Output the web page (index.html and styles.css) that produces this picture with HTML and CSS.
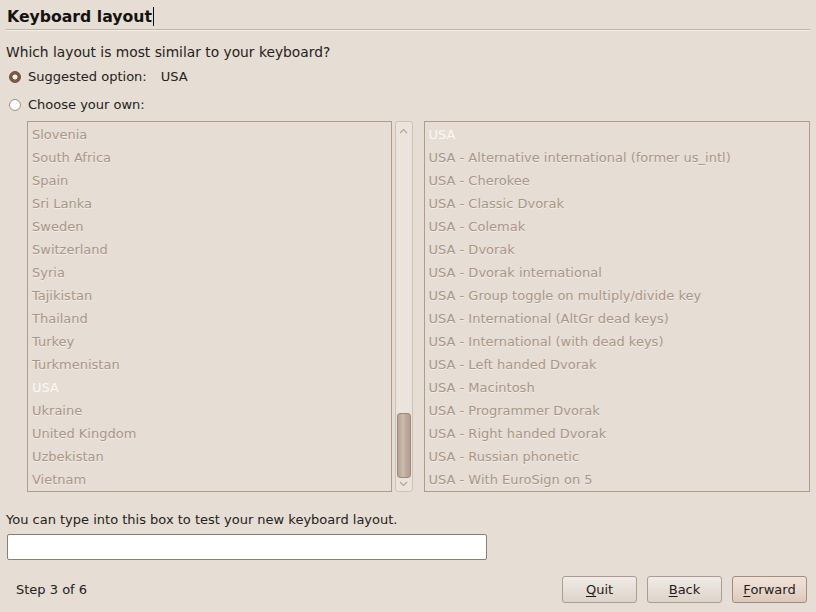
FILE: index.html
```html
<!DOCTYPE html>
<html>
<head>
<meta charset="utf-8">
<link rel="stylesheet" href="styles.css">
</head>
<body>
<div class="page">
  <div class="title"><span>Keyboard layout</span><span class="caret"></span></div>
  <div class="rule"></div>
  <div class="question">Which layout is most similar to your keyboard?</div>
  <label class="radio-row r1"><span class="radio on"></span><span>Suggested option:</span><span class="sugg">USA</span></label>
  <label class="radio-row r2"><span class="radio"></span><span>Choose your own:</span></label>
  <div class="lists">
    <div class="list left">
      <div class="item">Slovenia</div>
      <div class="item">South Africa</div>
      <div class="item">Spain</div>
      <div class="item">Sri Lanka</div>
      <div class="item">Sweden</div>
      <div class="item">Switzerland</div>
      <div class="item">Syria</div>
      <div class="item">Tajikistan</div>
      <div class="item">Thailand</div>
      <div class="item">Turkey</div>
      <div class="item">Turkmenistan</div>
      <div class="item sel">USA</div>
      <div class="item">Ukraine</div>
      <div class="item">United Kingdom</div>
      <div class="item">Uzbekistan</div>
      <div class="item">Vietnam</div>
    </div>
    <div class="scrollbar">
      <svg class="arrow" width="9" height="6" viewBox="0 0 9 6"><path d="M1 5 L4.5 1.5 L8 5" fill="none" stroke="#b4a699" stroke-width="1.2"/></svg>
      <div class="track"><div class="thumb"></div></div>
      <svg class="arrow" width="9" height="6" viewBox="0 0 9 6"><path d="M1 1 L4.5 4.5 L8 1" fill="none" stroke="#b4a699" stroke-width="1.2"/></svg>
    </div>
    <div class="list right">
      <div class="item sel">USA</div>
      <div class="item">USA - Alternative international (former us_intl)</div>
      <div class="item">USA - Cherokee</div>
      <div class="item">USA - Classic Dvorak</div>
      <div class="item">USA - Colemak</div>
      <div class="item">USA - Dvorak</div>
      <div class="item">USA - Dvorak international</div>
      <div class="item">USA - Group toggle on multiply/divide key</div>
      <div class="item">USA - International (AltGr dead keys)</div>
      <div class="item">USA - International (with dead keys)</div>
      <div class="item">USA - Left handed Dvorak</div>
      <div class="item">USA - Macintosh</div>
      <div class="item">USA - Programmer Dvorak</div>
      <div class="item">USA - Right handed Dvorak</div>
      <div class="item">USA - Russian phonetic</div>
      <div class="item">USA - With EuroSign on 5</div>
    </div>
  </div>
  <div class="hint">You can type into this box to test your new keyboard layout.</div>
  <div class="testbox"></div>
  <div class="footer">
    <div class="step">Step 3 of 6</div>
    <div class="buttons">
      <button class="btn"><u>Q</u>uit</button>
      <button class="btn"><u>B</u>ack</button>
      <button class="btn default"><u>F</u>orward</button>
    </div>
  </div>
</div>
</body>
</html>
```
FILE: styles.css
```css
html, body {
  margin: 0;
  padding: 0;
  background: #e6ddd4;
}
body {
  font-family: "DejaVu Sans", "Liberation Sans", sans-serif;
  font-size: 13px;
  color: #252220;
}
.page {
  width: 816px;
  height: 612px;
  box-sizing: border-box;
  padding: 0 6px 0 6px;
  display: flex;
  flex-direction: column;
}
.title {
  font-size: 15.7px;
  font-weight: bold;
  color: #151311;
  padding: 5px 0 0 1px;
  height: 22px;
  display: flex;
  align-items: center;
}
.caret {
  display: inline-block;
  width: 1px;
  height: 19px;
  background: #111;
  margin-left: 1px;
}
.rule {
  margin-top: 2px;
  height: 1px;
  background: #c2b5a8;
  border-bottom: 1px solid #f3eee9;
  width: 804px;
}
.question {
  margin-top: 13px;
  height: 16px;
  line-height: 16px;
  font-size: 13.8px;
}
.radio-row {
  display: flex;
  align-items: center;
  height: 16px;
  line-height: 16px;
  padding-left: 3px;
}
.r1 { margin-top: 9px; }
.r2 { margin-top: 12px; }
.radio {
  width: 10px;
  height: 10px;
  border-radius: 50%;
  border: 1px solid #9d9084;
  background: #fff;
  margin-right: 7px;
  box-sizing: content-box;
}
.radio.on {
  background: radial-gradient(circle, #f6efe9 0 2.2px, #7b5a48 2.8px);
  border-color: #6b4e3e;
}
.sugg { margin-left: 14px; }
.lists {
  margin-top: 8px;
  margin-left: 21px;
  display: flex;
  height: 371px;
}
.list {
  box-sizing: border-box;
  height: 371px;
  border: 1px solid #ac9d8c;
  padding: 1px 0 0 4px;
  overflow: hidden;
}
.left { width: 365px; }
.right { width: 387px; margin-left: 11px; }
.item {
  height: 23px;
  line-height: 23px;
  color: #a89787;
  white-space: nowrap;
  text-shadow: 0 1px 0 #f2ede8;
}
.item.sel {
  color: #fbf8f5;
  text-shadow: none;
}
.scrollbar {
  margin-left: 3px;
  width: 18px;
  box-sizing: border-box;
  height: 371px;
  border: 1px solid #cfc3b6;
  border-radius: 3px;
  background: #ebe4dc;
  display: flex;
  flex-direction: column;
  align-items: center;
}
.arrow {
  flex: none;
  margin: 6px 0 5px;
}
.arrow:last-child { margin: 3px 0 4px; }
.track {
  flex: 1;
  width: 100%;
  display: flex;
  flex-direction: column;
  justify-content: flex-end;
  padding: 0 1px;
  box-sizing: border-box;
}
.thumb {
  height: 63px;
  border: 1px solid #9a8b7e;
  border-radius: 3px;
  background: linear-gradient(to right, #b4a396, #cbbcae 45%, #bdad9f 60%, #b09f91);
}
.hint {
  margin-top: 20px;
  height: 16px;
  line-height: 16px;
}
.testbox {
  margin-top: 6px;
  margin-left: 1px;
  width: 480px;
  height: 26px;
  box-sizing: border-box;
  background: #fff;
  border: 1px solid #8c7e71;
  border-radius: 2px;
}
.footer {
  margin-top: 16px;
  display: flex;
  align-items: center;
  justify-content: space-between;
  height: 27px;
}
.step {
  padding-left: 10px;
  color: #252220;
}
.buttons {
  display: flex;
  gap: 10px;
  padding-right: 3px;
}
.btn {
  width: 75px;
  height: 27px;
  font-family: "DejaVu Sans", "Liberation Sans", sans-serif;
  font-size: 13px;
  color: #1e1c1a;
  border: 1px solid #aa9d91;
  border-radius: 3px;
  background: linear-gradient(to bottom, #f0ebe6, #e6ded6 55%, #ddd3c9);
  padding: 0;
  margin: 0;
}
.btn.default {
  background: linear-gradient(to bottom, #f0e2d9, #e8d6ca 55%, #dcc8bb);
  border-color: #a08c80;
}
.btn u { text-decoration-thickness: 1px; text-underline-offset: 2px; }
```
